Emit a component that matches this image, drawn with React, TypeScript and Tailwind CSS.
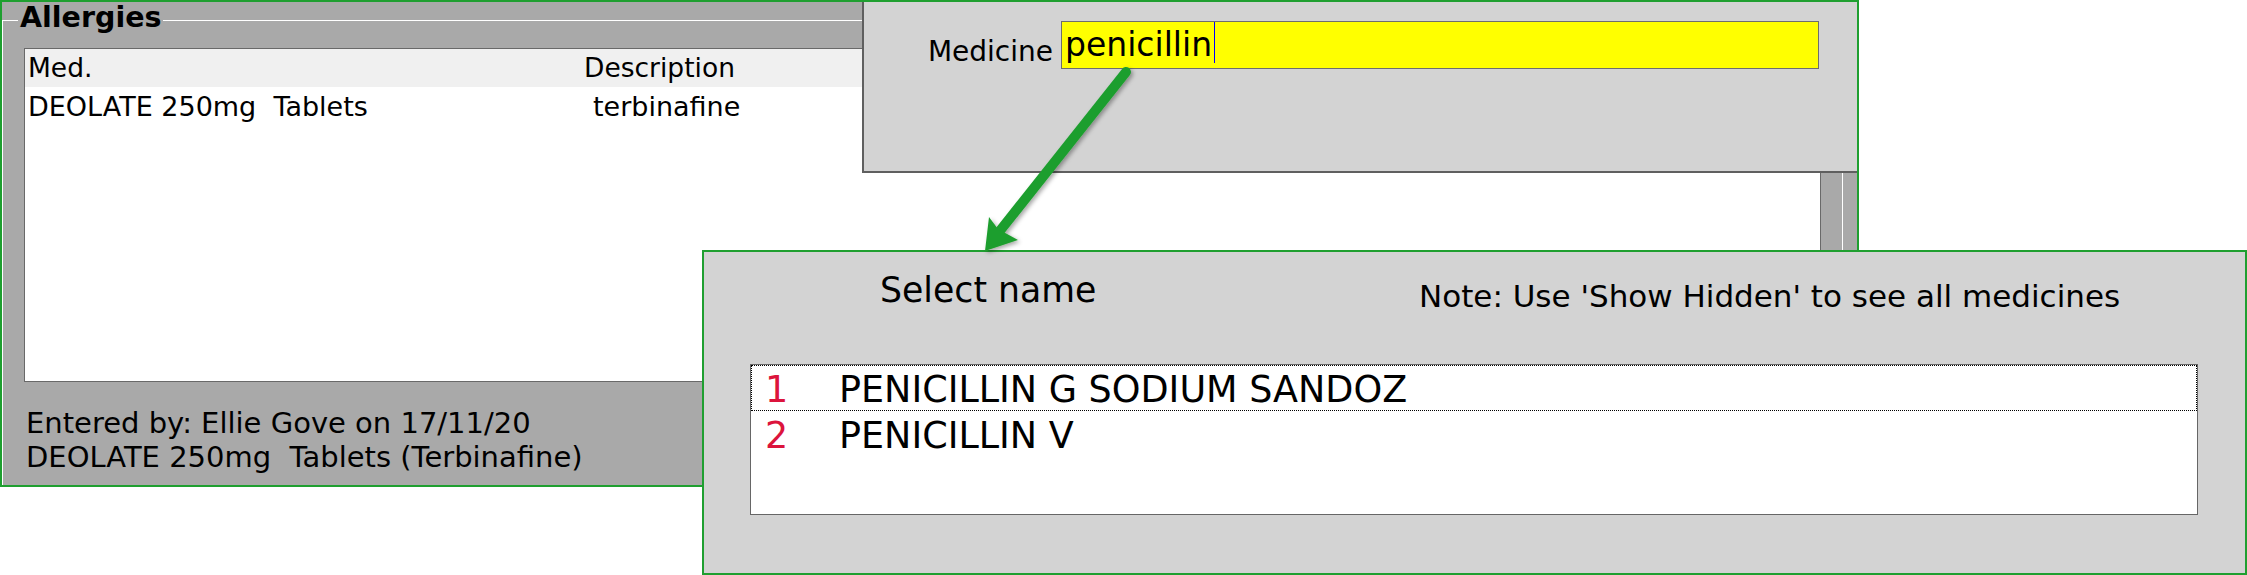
import React from "react";

export default function App() {
  return (
    <div className="relative w-[2247px] h-[575px] overflow-hidden bg-white text-black font-['DejaVu_Sans',Verdana,sans-serif]">
      {/* Allergies panel */}
      <div className="relative w-[1859px] h-[487px] bg-[#a9a9a9] pt-[20px] pl-[2px]">
        <div className="h-full w-[1841px] border-l border-t border-r border-white">
          <div className="-mt-[17px] ml-[15px] w-fit px-[2px] bg-[#a9a9a9] text-[28.5px] leading-[28px] font-bold">
            Allergies
          </div>
          <div className="mt-[16px] ml-[21px] w-[1797px] h-[334px] border border-[#696969] bg-white">
            <div className="flex h-[38px] bg-[#f0f0f0] text-[26.5px] leading-[38px]">
              <div className="w-[559px] pl-[3px]">Med.</div>
              <div>Description</div>
            </div>
            <div className="flex h-[40px] text-[27px] leading-[40px]">
              <div className="w-[559px] pl-[3px] whitespace-pre">DEOLATE 250mg  Tablets</div>
              <div className="pl-[9px]">terbinafine</div>
            </div>
          </div>
          <div className="mt-[24px] ml-[23px] text-[29px] leading-[34px] whitespace-pre">
            <div>Entered by: Ellie Gove on 17/11/20</div>
            <div>DEOLATE 250mg  Tablets (Terbinafine)</div>
          </div>
        </div>

        {/* Medicine search popup */}
        <div className="absolute left-[862px] top-0 w-[997px] h-[173px] border-l-2 border-b-2 border-[#5f5f5f] bg-[#d3d3d3]">
          <div className="flex items-start pt-[21px]">
            <div className="w-[197px] mt-[14px] pr-[8px] text-right text-[28px] leading-[34px]">Medicine</div>
            <div className="flex items-start w-[758px] h-[48px] border border-[#6d6d6d] bg-[#ffff00] pl-[3px]">
              <span className="text-[33px] leading-[46px]">penicillin</span>
              <span className="ml-[2px] w-[1px] h-[41px] bg-[#0000ff]" />
            </div>
          </div>
        </div>

        {/* frame of the allergies screenshot */}
        <div className="pointer-events-none absolute inset-0 border-2 border-[#1f9f30]" />
      </div>

      {/* Select name popup */}
      <div className="absolute left-[702px] top-[250px] w-[1545px] h-[325px] border-2 border-[#1f9f30] bg-[#d3d3d3]">
        <div className="flex items-start h-[64px] pt-[18px]">
          <div className="w-[715px] pl-[176px] text-[34.7px] leading-[40px]">Select name</div>
          <div className="mt-[6px] text-[31px] leading-[40px] whitespace-pre">Note: Use 'Show Hidden' to see all medicines</div>
        </div>
        <div className="mt-[48px] ml-[46px] w-[1448px] h-[151px] border border-[#666666] bg-white text-[36.5px]">
          <div className="flex h-[46px] border border-dotted border-black pl-[13px] leading-[47px]">
            <span className="w-[74px] text-[#dc143c]">1</span>
            <span>PENICILLIN G SODIUM SANDOZ</span>
          </div>
          <div className="flex h-[46px] border border-transparent pl-[13px] leading-[47px]">
            <span className="w-[74px] text-[#dc143c]">2</span>
            <span>PENICILLIN V</span>
          </div>
        </div>
      </div>

      {/* Green arrow annotation */}
      <svg
        className="pointer-events-none absolute left-0 top-0"
        width="2247"
        height="575"
        viewBox="0 0 2247 575"
      >
        <defs>
          <filter id="sh" x="-20%" y="-20%" width="140%" height="140%">
            <feDropShadow dx="2" dy="2" stdDeviation="2" floodColor="#000" floodOpacity="0.35" />
          </filter>
        </defs>
        <g filter="url(#sh)" fill="#1f9e2f" stroke="none">
          <line x1="1126" y1="72" x2="999" y2="232" stroke="#1f9e2f" strokeWidth="10" strokeLinecap="round" />
          <polygon points="985,251 989,217 998,229 1018,240" />
        </g>
      </svg>
    </div>
  );
}
